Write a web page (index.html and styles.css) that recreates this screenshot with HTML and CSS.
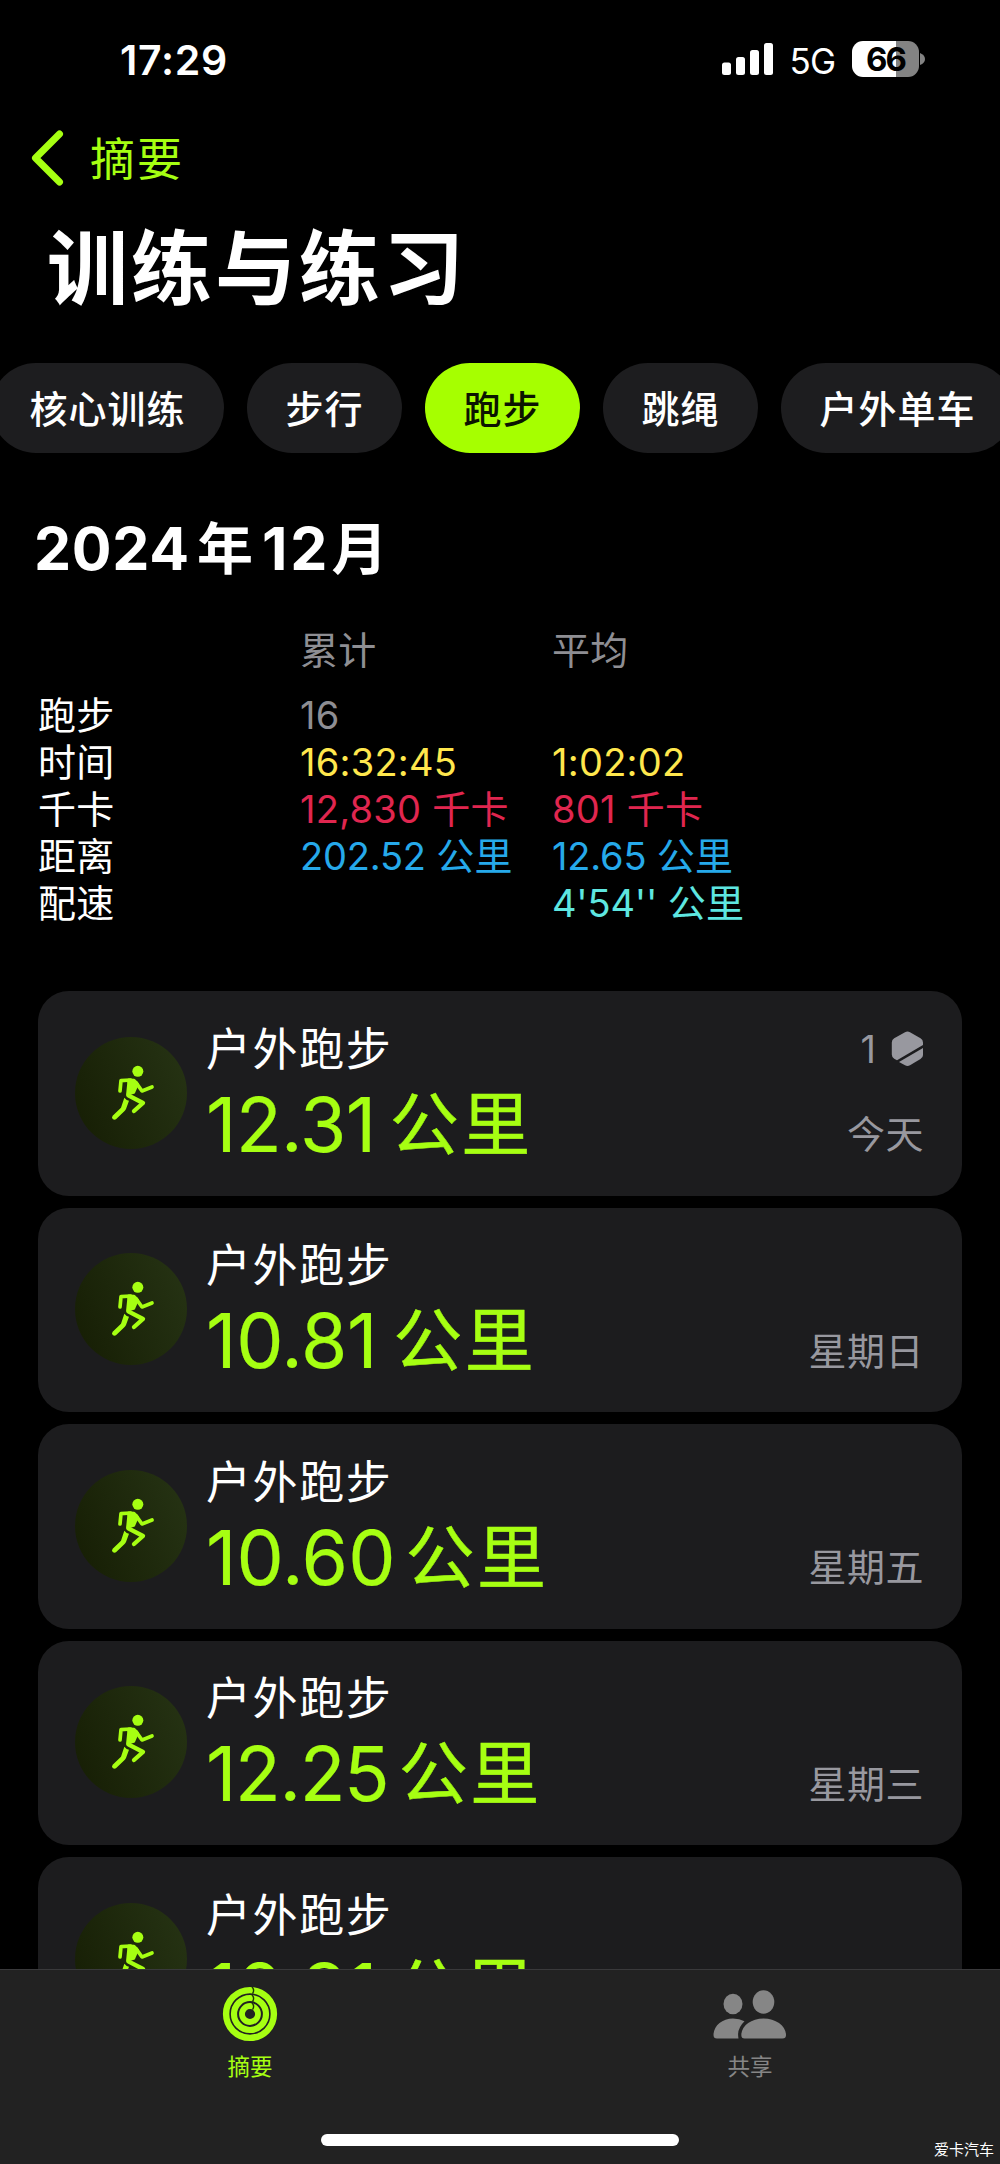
FILE: index.html
```html
<!DOCTYPE html>
<html lang="zh-CN">
<head>
<meta charset="utf-8">
<title>训练与练习</title>
<link rel="stylesheet" href="styles.css">
</head>
<body>
<svg class="defs" width="0" height="0" aria-hidden="true">
  <defs>
    <linearGradient id="disc" x1="0" y1="0.7" x2="1" y2="0.3">
      <stop offset="0" stop-color="#171f05"/>
      <stop offset="1" stop-color="#253213"/>
    </linearGradient>
    <symbol id="runner" viewBox="45 49 336 336">
      <circle cx="213" cy="217" r="168" fill="url(#disc)"/>
      <g fill="#a6ff12" stroke="#a6ff12" stroke-linecap="round" stroke-linejoin="round">
        <circle cx="233.5" cy="152" r="16.5" stroke="none"/>
        <path d="M180 211L183 180L212 178" fill="none" stroke-width="11"/>
        <path d="M228 186L246 211L276 199" fill="none" stroke-width="11"/>
        <path d="M206 178L222 179L232 190L221 215L203 220L206 190Z" stroke-width="9"/>
        <path d="M205 224L249 247L222 271" fill="none" stroke-width="13"/>
        <path d="M193 231Q199 239 207 240L198 265Q196 269 193 272L168 296Q163 299 158 295Q154 290 158 285L183 261Z" stroke="none"/>
      </g>
    </symbol>
  </defs>
</svg>
<div class="screen">
  <header class="status">
    <span class="time">17:29</span>
    <div class="indicators">
      <svg class="signal" width="52" height="32" viewBox="0 0 52 32" fill="#fff">
        <rect x="0" y="19.500" width="9" height="12.500" rx="2.500"/><rect x="14" y="14" width="9" height="18" rx="2.500"/>
        <rect x="28" y="7" width="9" height="25" rx="2.500"/><rect x="42" y="0" width="9" height="32" rx="2.500"/>
      </svg>
      <span class="network">5G</span>
      <div class="battery"><span class="level">66</span></div>
      <svg class="nub" width="5" height="12" viewBox="0 0 5 12"><path d="M0 0Q5 2 5 6T0 12Z" fill="#838383"/></svg>
    </div>
  </header>
  <nav class="back">
    <svg width="34" height="56" viewBox="0 0 34 56" fill="none" stroke="#a6ff12" stroke-width="7" stroke-linecap="round" stroke-linejoin="round"><path d="M28.500 4L4.500 28L28.500 52"/></svg>
    <span>摘要</span>
  </nav>
  <h1>训练与练习</h1>
  <div class="chips">
    <span class="chip">核心训练</span><span class="chip">步行</span><span class="chip active">跑步</span><span class="chip">跳绳</span><span class="chip">户外单车</span>
  </div>
  <h2><span class="num">2024</span><span class="zh year">年</span><span class="num month">12</span><span class="zh">月</span></h2>
  <div class="summary">
    <div class="row head"><span></span><span>累计</span><span>平均</span></div>
    <div class="row"><span>跑步</span><span class="grey">16</span><span></span></div>
    <div class="row yellow"><span>时间</span><span>16:32:45</span><span>1:02:02</span></div>
    <div class="row red"><span>千卡</span><span>12,830 <i>千卡</i></span><span>801 <i>千卡</i></span></div>
    <div class="row blue"><span>距离</span><span>202.52 <i>公里</i></span><span>12.65 <i>公里</i></span></div>
    <div class="row teal"><span>配速</span><span></span><span>4'54'' <i>公里</i></span></div>
  </div>
  <main class="list">
    <article class="card">
      <svg class="disc"><use href="#runner"/></svg>
      <div class="info"><div class="name">户外跑步</div><div class="value tight"><span class="n">12.31</span><span class="u">公里</span></div></div>
      <div class="meta">
        <div class="award">1<svg width="33" height="36" viewBox="0 0 33 36" fill="#98989f"><path d="M14 1.200Q16.500 -.2 19 1.200L29.500 7.200Q32 8.700 32 11.500V14L6 29.200L3.200 27.700Q.8 26.200 .8 23.500V11.500Q.8 8.700 3.200 7.200Z"/><path d="M32 17V24Q32 26.500 29.500 28L19 34.300Q16.500 35.700 14 34.300L8 30.900Z"/></svg></div>
        <div class="day">今天</div>
      </div>
    </article>
    <article class="card">
      <svg class="disc"><use href="#runner"/></svg>
      <div class="info"><div class="name">户外跑步</div><div class="value snug"><span class="n">10.81</span><span class="u">公里</span></div></div>
      <div class="meta"><div class="day">星期日</div></div>
    </article>
    <article class="card">
      <svg class="disc"><use href="#runner"/></svg>
      <div class="info"><div class="name">户外跑步</div><div class="value"><span class="n">10.60</span><span class="u">公里</span></div></div>
      <div class="meta"><div class="day">星期五</div></div>
    </article>
    <article class="card">
      <svg class="disc"><use href="#runner"/></svg>
      <div class="info"><div class="name">户外跑步</div><div class="value tighter"><span class="n">12.25</span><span class="u">公里</span></div></div>
      <div class="meta"><div class="day">星期三</div></div>
    </article>
    <article class="card">
      <svg class="disc"><use href="#runner"/></svg>
      <div class="info"><div class="name">户外跑步</div><div class="value snug"><span class="n">10.81</span><span class="u">公里</span></div></div>
    </article>
  </main>
  <footer class="tabbar">
    <div class="tab on">
      <svg width="56" height="56" viewBox="0 0 56 56" fill="none">
        <g stroke="#a6ff12"><circle cx="28" cy="28" r="23.900" stroke-width="6.400"/><circle cx="28" cy="28" r="16" stroke-width="6.200"/><circle cx="28" cy="28" r="8" stroke-width="5.800"/></g>
        <path d="M30 1Q33 4 30.500 7.600M30 9Q33 12 30.500 15.600M30 17Q33 20 30.500 23.600" stroke="#1d3508" stroke-width="1.400"/>
      </svg>
      <span>摘要</span>
    </div>
    <div class="tab">
      <svg width="74" height="56" viewBox="0 0 74 56" fill="#868686">
        <ellipse cx="20" cy="21" rx="9.500" ry="10.300"/><ellipse cx="50.500" cy="19" rx="10.800" ry="11.700"/>
        <path d="M4 55.500Q.5 55.500 .5 52C.5 43 9 35.500 20 35.500Q26.500 35.500 31.500 38.300Q23.500 46 25.500 55.500Z"/>
        <path d="M31.500 55.500Q28.300 55.500 28.300 52C28.300 43 38 35.500 50.500 35.500S73 43 73 52Q73 55.500 69.500 55.500Z"/>
      </svg>
      <span>共享</span>
    </div>
    <div class="home"></div>
    <span class="credit">爱卡汽车</span>
  </footer>
</div>
</body>
</html>
```
FILE: styles.css
```css
* { box-sizing: border-box; }
body { margin: 0; background: #000; color: #fff; font-family: Inter, "Noto Sans CJK SC", sans-serif; }
.defs { position: absolute; }
.screen { position: relative; width: 1000px; height: 2164px; overflow: hidden; background: #000; }
i { font-style: normal; }

.status { display: flex; justify-content: space-between; align-items: center; height: 118px; padding: 0 75px 0 120px; }
.time { font-size: 41px; font-weight: 600; line-height: 50px; letter-spacing: 0.7px; padding-top: 2px; }
.indicators { display: flex; align-items: center; }
.network { font-size: 35px; line-height: 40px; margin: 3px 17px 0 16px; letter-spacing: -1px; }
.battery { width: 67px; height: 36px; border-radius: 11px; background: linear-gradient(90deg, #fff 44px, #838383 44px); color: #000; text-align: center; }
.level { font-size: 33px; font-weight: 700; line-height: 36px; letter-spacing: -2px; }
.nub { margin-left: 1px; }

.back { display: flex; align-items: center; gap: 25px; height: 80px; padding-left: 31px; color: #a6ff12; font-size: 45px; letter-spacing: 2px; line-height: 60px; }
.back span { padding-top: 3px; }
h1 { margin: 21px 0 0; padding-left: 47px; font-size: 81px; font-weight: 700; letter-spacing: 3px; line-height: 100px; }

.chips { display: flex; gap: 23px; width: 1100px; margin: 44px 0 0 -9px; }
.chip { flex: none; height: 90px; padding: 0 38.5px; border-radius: 45px; background: #1d1d1f; font-size: 38px; font-weight: 500; line-height: 92px; letter-spacing: 1px; }
.chip.active { background: #a6ff00; color: #0c1400; }

h2 { display: flex; margin: 66px 0 0; padding-left: 34px; font-weight: 700; line-height: 60px; }
h2 .num { font-size: 59px; letter-spacing: 0.7px; }
h2 .month { letter-spacing: 3px; }
h2 .zh { font-size: 56px; margin-left: 7px; }
h2 .month + .zh { margin-left: 1px; }
h2 .year { margin-right: 9px; }

.summary { padding: 47px 0 0 38px; font-size: 38px; line-height: 48px; }
.row { display: grid; grid-template-columns: 262px 252px 1fr; height: 47px; white-space: pre; }
.row span + span { letter-spacing: 0.25px; }
.row span:first-child, .row i, .head span { letter-spacing: 0.3px; }
.head { height: 65px; color: #8e8e93; }
.grey { color: #8e8e93; }
.yellow span + span { color: #ffe74d; }
.red span + span { color: #e0264f; }
.blue span + span { color: #26a9ea; letter-spacing: -0.2px; }
.teal span + span { color: #5ee6e0; letter-spacing: -0.2px; }

.list { display: flex; flex-direction: column; gap: 12px; padding: 65px 38px 0; }
.card { display: flex; flex: none; height: 204.5px; padding: 0 38px 0 37px; border-radius: 31px; background: #1c1c1e; }
.disc { width: 112px; height: 112px; margin-top: 45.5px; }
.info { margin-left: 19px; padding-top: 28.5px; }
.name { font-size: 45px; line-height: 60px; letter-spacing: 1.6px; }
.value { display: flex; color: #a6ff12; line-height: 90px; white-space: nowrap; }
.n { font-size: 75px; -webkit-text-stroke: 0.2px #a6ff12; }
.u { font-size: 69px; letter-spacing: 2.5px; margin-left: 10px; -webkit-text-stroke: 0.5px #a6ff12; }
.tight .n { letter-spacing: -0.6px; }
.tight .u { margin-left: 14px; }
.snug .n { letter-spacing: -0.3px; }
.snug .u { margin-left: 16px; }
.tighter .n { letter-spacing: -1.4px; }
.tighter .u { margin-left: 10.5px; }
.meta { display: flex; flex-direction: column; justify-content: flex-end; align-items: flex-end; margin-left: auto; padding-bottom: 36.5px; color: #98989f; font-size: 38px; line-height: 50px; }
.day { letter-spacing: 0.5px; }
.award { display: flex; align-items: center; gap: 15px; height: 50px; margin-bottom: 35px; }

.tabbar { position: absolute; left: 0; right: 0; bottom: 0; height: 195px; display: grid; grid-template-columns: 1fr 1fr; background: #222; border-top: 1px solid #39393b; }
.tab { display: flex; flex-direction: column; align-items: center; padding-top: 15.500px; color: #868686; font-size: 22.500px; line-height: 30px; gap: 10px; }
.tab.on { color: #a6ff12; }
.tab:nth-child(2) svg { margin-top: -3px; margin-bottom: 3px; }
.home { position: absolute; left: 321px; top: 164px; width: 358px; height: 12px; border-radius: 6px; background: #fff; }
.credit { position: absolute; right: 6px; bottom: 4px; font-size: 15px; line-height: 20px; }
```
